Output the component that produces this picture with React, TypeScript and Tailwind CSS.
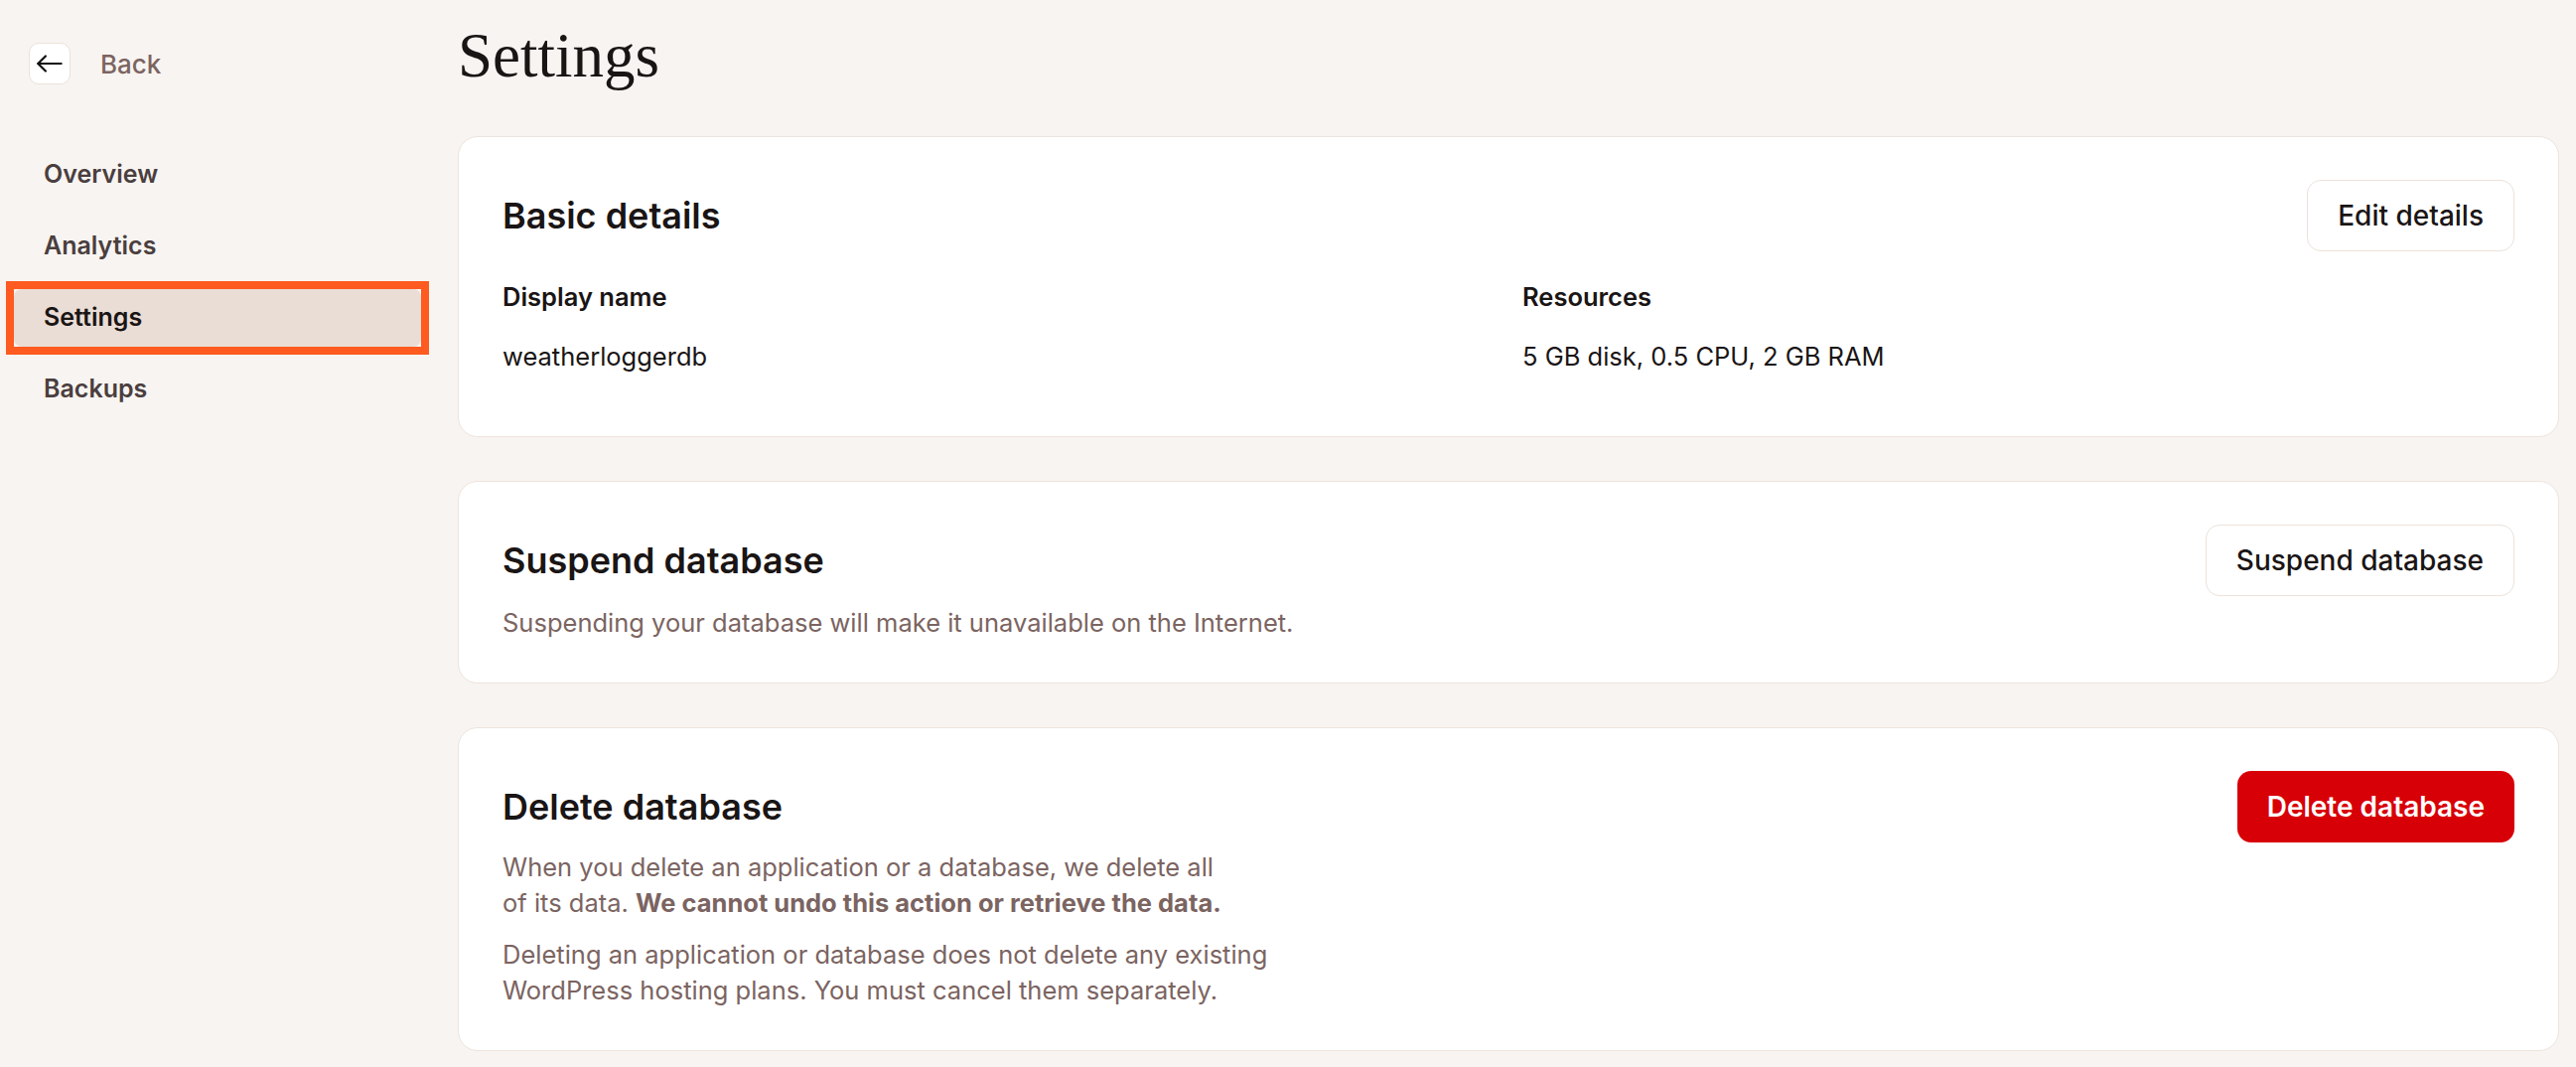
import React from "react";

const font = { fontFamily: "Inter, 'Noto Sans', Arial, sans-serif" };

function BackArrow() {
  return (
    <svg width="28" height="28" viewBox="0 0 24 24" fill="none" stroke="#111" strokeWidth="1.9" strokeLinecap="round" strokeLinejoin="round">
      <path d="M22 12H2" />
      <path d="M8.5 5.5L2 12l6.5 6.5" />
    </svg>
  );
}

function NavItem({ label, active }: { label: string; active?: boolean }) {
  return (
    <div className="relative">
      <div
        className={
          "h-[58px] flex items-center pl-[30px] rounded-[8px] text-[25px] font-semibold " +
          (active ? "bg-[#eaddd5] text-[#1a1515]" : "text-[#4a3e3e]")
        }
      >
        {label}
      </div>
      {active && <div className="absolute -inset-[8px] border-[8px] border-[#ff5a1f] pointer-events-none" />}
    </div>
  );
}

function OutlineButton({ children }: { children: React.ReactNode }) {
  return (
    <button className="h-[72px] px-[30px] rounded-[14px] border border-[#ece2da] bg-white text-[28px] font-medium text-[#1a1515]">
      {children}
    </button>
  );
}

export default function App() {
  return (
    <div className="min-h-screen w-full bg-[#f8f4f1] flex" style={font}>
      <aside className="w-[461px] shrink-0">
        <div className="flex items-center pt-[43px] pl-[29px] gap-[30px]">
          <div className="w-[42px] h-[42px] rounded-[10px] bg-white border border-[#ece2da] flex items-center justify-center">
            <BackArrow />
          </div>
          <span className="text-[26px] font-medium text-[#7b6461]">Back</span>
        </div>
        <nav className="mt-[62px] ml-[14px] w-[410px] flex flex-col gap-[14px]">
          <NavItem label="Overview" />
          <NavItem label="Analytics" />
          <NavItem label="Settings" active />
          <NavItem label="Backups" />
        </nav>
      </aside>

      <main className="flex-1 pr-[17px]">
        <h1
          className="pt-[19px] text-[63px] leading-[74px] text-[#1a1515]"
          style={{ fontFamily: "'Liberation Serif', 'Times New Roman', serif" }}
        >
          Settings
        </h1>

        <div className="mt-[44px] flex flex-col gap-[44px]">
          <section className="rounded-[20px] border border-[#ede4dd] bg-white px-[44px] pt-[43px] pb-[62px]">
            <div className="h-[72px] flex items-center justify-between">
              <h2 className="text-[36px] leading-[48px] font-semibold text-[#1a1515]">Basic details</h2>
              <OutlineButton>Edit details</OutlineButton>
            </div>
            <div className="mt-[28px] grid grid-cols-2 gap-x-[28px] text-[25.5px] leading-[36px] text-[#1a1515]">
              <div>
                <div className="font-semibold">Display name</div>
                <div className="mt-[24px]">weatherloggerdb</div>
              </div>
              <div>
                <div className="font-semibold">Resources</div>
                <div className="mt-[24px]">5 GB disk, 0.5 CPU, 2 GB RAM</div>
              </div>
            </div>
          </section>

          <section className="rounded-[20px] border border-[#ede4dd] bg-white px-[44px] pt-[43px] pb-[42px]">
            <div className="h-[72px] flex items-center justify-between">
              <h2 className="text-[36px] leading-[48px] font-semibold text-[#1a1515]">Suspend database</h2>
              <OutlineButton>Suspend database</OutlineButton>
            </div>
            <p className="mt-[9px] text-[25.5px] leading-[36px] text-[#7b6461]">
              Suspending your database will make it unavailable on the Internet.
            </p>
          </section>

          <section className="rounded-[20px] border border-[#ede4dd] bg-white px-[44px] pt-[43px] pb-[42px]">
            <div className="h-[72px] flex items-center justify-between">
              <h2 className="text-[36px] leading-[48px] font-semibold text-[#1a1515]">Delete database</h2>
              <button className="h-[72px] px-[30px] rounded-[14px] bg-[#d80007] text-[28px] font-semibold text-white">
                Delete database
              </button>
            </div>
            <p className="mt-[7px] text-[25.5px] leading-[36px] text-[#7b6461]">
              When you delete an application or a database, we delete all
              <br />
              of its data. <strong className="font-bold">We cannot undo this action or retrieve the data.</strong>
            </p>
            <p className="mt-[16px] text-[25.5px] leading-[36px] text-[#7b6461]">
              Deleting an application or database does not delete any existing
              <br />
              WordPress hosting plans. You must cancel them separately.
            </p>
          </section>
        </div>
      </main>
    </div>
  );
}
